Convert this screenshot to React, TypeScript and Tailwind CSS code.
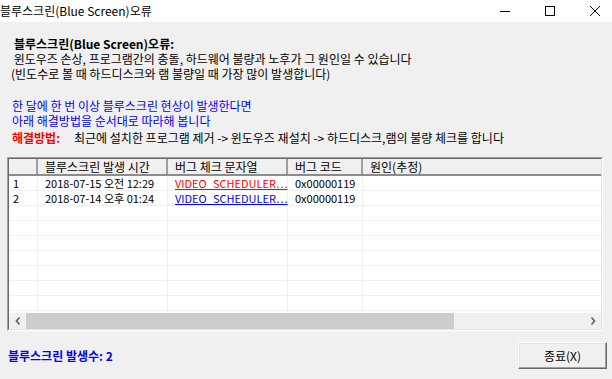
import React from "react";

const font = { fontFamily: '"Noto Sans CJK KR", "Noto Sans", sans-serif' };

const rows = [
  { n: "1", t: "2018-07-15 오전 12:29", s: "VIDEO_SCHEDULER…", c: "0x00000119", red: true },
  { n: "2", t: "2018-07-14 오후 01:24", s: "VIDEO_SCHEDULER…", c: "0x00000119", red: false },
];

function Cells({ r }: { r?: (typeof rows)[number] }) {
  return (
    <div className="flex h-[15px] shadow-[inset_0_-1px_0_#f0f0f0] text-[11px] leading-[15px] text-black">
      <div className="w-[29px] shrink-0 border-r border-[#f0f0f0] pl-[4px] whitespace-nowrap">{r?.n}</div>
      <div className="w-[130px] shrink-0 border-r border-[#f0f0f0] pl-[7px] whitespace-nowrap">{r?.t}</div>
      <div className="w-[120px] shrink-0 border-r border-[#f0f0f0] pl-[7px] whitespace-nowrap">
        {r && (
          <span className={r.red ? "text-[#ff0000] underline" : "text-[#0000ff] underline"}>{r.s}</span>
        )}
      </div>
      <div className="w-[75px] shrink-0 border-r border-[#f0f0f0] pl-[7px] whitespace-nowrap">{r?.c}</div>
      <div className="flex-1" />
    </div>
  );
}

export default function App() {
  return (
    <div className="w-[612px] h-[379px] bg-[#f0f0f0] overflow-hidden flex flex-col text-black" style={font}>
      {/* title bar */}
      <div className="h-[22px] bg-white flex items-center shrink-0">
        <div className="text-[12px] leading-[16px] whitespace-nowrap">블루스크린(Blue Screen)오류</div>
        <div className="flex-1" />
        <div className="flex h-full -mr-[5px]">
          <div className="w-[45px] h-full flex items-center justify-center">
            <svg width="10" height="10" viewBox="0 0 10 10">
              <line x1="0" y1="5.5" x2="10" y2="5.5" stroke="#000" strokeWidth="1" />
            </svg>
          </div>
          <div className="w-[45px] h-full flex items-center justify-center">
            <svg width="10" height="10" viewBox="0 0 10 10">
              <rect x="0.5" y="0.5" width="9" height="9" fill="none" stroke="#000" strokeWidth="1" />
            </svg>
          </div>
          <div className="w-[45px] h-full flex items-center justify-center">
            <svg width="10" height="10" viewBox="0 0 10 10">
              <path d="M0 0 L10 10 M10 0 L0 10" stroke="#000" strokeWidth="1" />
            </svg>
          </div>
        </div>
      </div>

      {/* message text */}
      <div className="pt-[15px] text-[12px] leading-[15px] whitespace-nowrap">
        <div className="h-[14px] pl-[14px] font-bold leading-[14px]">블루스크린(Blue Screen)오류:</div>
        <div className="h-[15px] pl-[11px]">&nbsp;윈도우즈 손상, 프로그램간의 충돌, 하드웨어 불량과 노후가 그 원인일 수 있습니다</div>
        <div className="h-[15px] pl-[11px]">(빈도수로 볼 때 하드디스크와 램 불량일 때 가장 많이 발생합니다)</div>
        <div className="h-[15px] pl-[12px] mt-[17px] text-[#0000ff]">한 달에 한 번 이상 블루스크린 현상이 발생한다면</div>
        <div className="h-[15px] pl-[12px] text-[#0000ff]">아래 해결방법을 순서대로 따라해 봅니다</div>
        <div className="h-[15px] pl-[12px] mt-[2px] flex">
          <span className="w-[62px] font-bold text-[#ff0000]">해결방법:</span>
          <span>최근에 설치한 프로그램 제거 -&gt; 윈도우즈 재설치 -&gt; 하드디스크,램의 불량 체크를 합니다</span>
        </div>
      </div>

      {/* list */}
      <div className="ml-[7px] w-[596px] mt-[12px] h-[174px] shrink-0 border-l border-t border-[#a0a0a0] border-r-white border-b-white border-r border-b">
        <div className="h-full flex flex-col border-l border-t border-[#696969] border-r-[#e3e3e3] border-b-[#e3e3e3] border-r border-b bg-white overflow-hidden">
          {/* header */}
          <div className="h-[17px] shrink-0 flex bg-[#f0f0f0] border-b-2 border-[#8c8c8c] text-[12px] leading-[15px] whitespace-nowrap">
            <div className="w-[29px] shrink-0 border-r-2 border-[#a0a0a0]" />
            <div className="w-[130px] shrink-0 border-r-2 border-[#a0a0a0] pl-[7px]">블루스크린 발생 시간</div>
            <div className="w-[120px] shrink-0 border-r-2 border-[#a0a0a0] pl-[7px]">버그 체크 문자열</div>
            <div className="w-[75px] shrink-0 border-r-2 border-[#a0a0a0] pl-[7px]">버그 코드</div>
            <div className="flex-1 pl-[7px]">원인(추정)</div>
          </div>
          {/* body */}
          <div className="flex-1 overflow-hidden">
            <Cells r={rows[0]} />
            <Cells r={rows[1]} />
            {Array.from({ length: 8 }).map((_, i) => (
              <Cells key={i} />
            ))}
          </div>
          {/* scrollbar */}
          <div className="h-[16px] shrink-0 flex bg-[#f0f0f0]">
            <div className="w-[17px] shrink-0 flex items-center justify-center">
              <svg width="6" height="8" viewBox="0 0 6 8">
                <path d="M4.5 0.5 L1.5 4 L4.5 7.5" fill="none" stroke="#606060" strokeWidth="1.6" />
              </svg>
            </div>
            <div className="flex-1 flex">
              <div className="w-[428px] h-full bg-[#cdcdcd]" />
            </div>
            <div className="w-[17px] shrink-0 flex items-center justify-center">
              <svg width="6" height="8" viewBox="0 0 6 8">
                <path d="M1.5 0.5 L4.5 4 L1.5 7.5" fill="none" stroke="#606060" strokeWidth="1.6" />
              </svg>
            </div>
          </div>
        </div>
      </div>

      {/* bottom */}
      <div className="flex-1 flex items-center justify-between pl-[8px] pr-[5px]">
        <div className="text-[12px] leading-[15px] font-bold text-[#0000ff] whitespace-nowrap">블루스크린 발생수: 2</div>
        <div className="w-[89px] h-[27px] flex items-center justify-center bg-[#f0f0f0] border-t border-l border-white border-r border-b border-r-[#696969] border-b-[#696969] shadow-[inset_-1px_-1px_0_#a0a0a0,inset_1px_1px_0_#e3e3e3] text-[12px] leading-[15px]">
          종료(X)
        </div>
      </div>
    </div>
  );
}
